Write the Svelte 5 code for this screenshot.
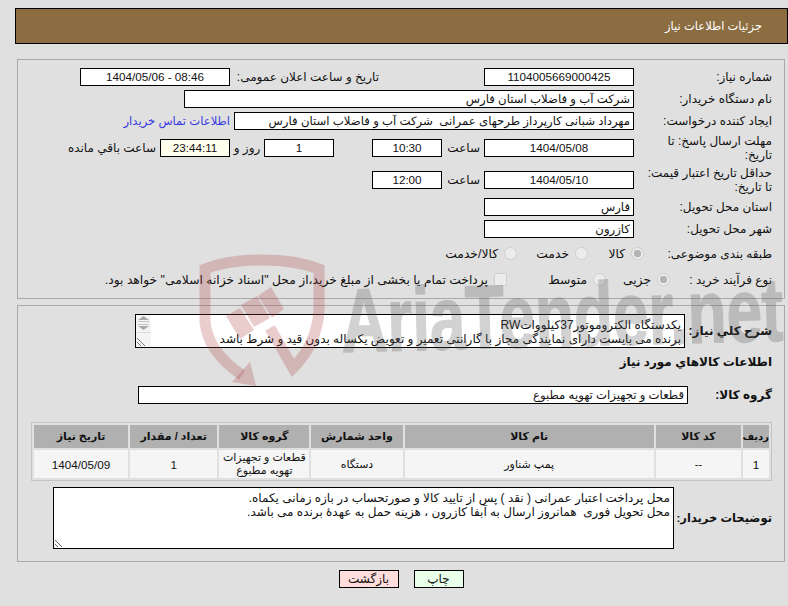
<script lang="ts">
  type Item = { row: string; code: string; name: string; unit: string; group: string; qty: string; date: string };

  const columns = [
    { title: 'ردیف', width: 26 },
    { title: 'کد کالا', width: 85 },
    { title: 'نام کالا', width: 249 },
    { title: 'واحد شمارش', width: 91 },
    { title: 'گروه کالا', width: 90 },
    { title: 'تعداد / مقدار', width: 87 },
    { title: 'تاریخ نیاز', width: 94 }
  ];

  const items: Item[] = [
    { row: '1', code: '--', name: 'پمپ شناور', unit: 'دستگاه', group: 'قطعات و تجهیزات تهویه مطبوع', qty: '1', date: '1404/05/09' }
  ];

  const summary =
    'یکدستگاه الکتروموتور37کیلوواتRW\nبرنده می بایست دارای نمایندگی مجاز با گارانتی تعمیر و تعویض یکساله بدون قید و شرط باشد';
  const notes =
    'محل پرداخت اعتبار عمرانی ( نقد ) پس از تایید کالا و صورتحساب در بازه زمانی یکماه.\nمحل تحویل فوری  همانروز ارسال به آبفا کازرون ، هزینه حمل به عهدهٔ برنده می باشد.';
</script>

<div class="page" dir="rtl">
  <header class="title-bar">جزئیات اطلاعات نیاز</header>

  <section class="panel info">
    <div class="row">
      <div class="label">شماره نیاز:</div>
      <div class="field center w150">1104005669000425</div>
      <div class="text announce">تاریخ و ساعت اعلان عمومی:</div>
      <div class="field center w150" dir="ltr">1404/05/06 - 08:46</div>
    </div>
    <div class="row">
      <div class="label">نام دستگاه خریدار:</div>
      <div class="field w450">شرکت آب و فاضلاب استان فارس</div>
    </div>
    <div class="row">
      <div class="label">ایجاد کننده درخواست:</div>
      <div class="field w400">مهرداد شبانی کارپرداز طرحهای عمرانی&nbsp; شرکت آب و فاضلاب استان فارس</div>
      <span class="link">اطلاعات تماس خریدار</span>
    </div>
    <div class="row tall">
      <div class="label">مهلت ارسال پاسخ: تا تاریخ:</div>
      <div class="field center w150">1404/05/08</div>
      <div class="text hour">ساعت</div>
      <div class="field center w70">10:30</div>
      <div class="field center w70 days">1</div>
      <div class="text day">روز و</div>
      <div class="field center w70 remain">23:44:11</div>
      <div class="text left">ساعت باقي مانده</div>
    </div>
    <div class="row tall">
      <div class="label">حداقل تاریخ اعتبار قیمت: تا تاریخ:</div>
      <div class="field center w150">1404/05/10</div>
      <div class="text hour">ساعت</div>
      <div class="field center w70">12:00</div>
    </div>
    <div class="row">
      <div class="label">استان محل تحویل:</div>
      <div class="field w150">فارس</div>
    </div>
    <div class="row">
      <div class="label">شهر محل تحویل:</div>
      <div class="field w150">کازرون</div>
    </div>
    <div class="row choice cat">
      <div class="label cat-label">طبقه بندی موضوعی:</div>
      <label class="opt o1"><input type="radio" name="cat" checked disabled />کالا</label>
      <label class="opt o2"><input type="radio" name="cat" disabled />خدمت</label>
      <label class="opt"><input type="radio" name="cat" disabled />کالا/خدمت</label>
    </div>
    <div class="row choice kind">
      <div class="label kind-label">نوع فرآیند خرید :</div>
      <label class="opt o4"><input type="radio" name="kind" checked disabled />جزیی</label>
      <label class="opt o5"><input type="radio" name="kind" disabled />متوسط</label>
      <label class="opt"><input type="checkbox" disabled />پرداخت تمام یا بخشی از مبلغ خرید،از محل "اسناد خزانه اسلامی" خواهد بود.</label>
    </div>
  </section>

  <section class="panel detail">
    <div class="row summary">
      <div class="label bold short summary-label">شرح کلي نیاز:</div>
      <div class="area-wrap">
        <textarea class="area area-summary" readonly value={summary}></textarea>
        <div class="fake-scroll">
          <svg width="15" height="32" viewBox="0 0 15 32">
            <path d="M7.5 1 L13 5 H2 Z M2 11 H13 L7.5 15 Z" fill="#a8a8a8" />
            <path d="M2 6.5 H13 M2 9.5 H13" stroke="#c4c4c4" />
            <path d="M0 17.5 H15" stroke="#dcdcdc" />
            <path d="M1 23 L9 31 M1 27 L5 31" stroke="#777" />
          </svg>
        </div>
      </div>
    </div>
    <div class="heading">اطلاعات کالاهاي مورد نیاز</div>
    <div class="row group">
      <div class="label bold short group-label">گروه کالا:</div>
      <div class="field w550">قطعات و تجهیزات تهویه مطبوع</div>
    </div>

    <table class="goods">
      <thead>
        <tr>
          {#each columns as col}
            <th style="width: {col.width}px">{col.title}</th>
          {/each}
        </tr>
      </thead>
      <tbody>
        {#each items as item}
          <tr>
            <td class="num">{item.row}</td>
            <td>{item.code}</td>
            <td>{item.name}</td>
            <td>{item.unit}</td>
            <td>{item.group}</td>
            <td class="num">{item.qty}</td>
            <td class="num">{item.date}</td>
          </tr>
        {/each}
      </tbody>
    </table>

    <div class="row notes">
      <div class="label bold notes-label">توضیحات خریدار:</div>
      <textarea class="area area-notes" readonly value={notes}></textarea>
    </div>
  </section>

  <div class="actions">
    <button class="btn print">چاپ</button>
    <button class="btn back">بازگشت</button>
  </div>

  <svg class="watermark" width="788" height="606" viewBox="0 0 788 606" aria-hidden="true">
    <g fill="none" stroke="rgb(171,60,60)" stroke-opacity="0.26" stroke-width="11">
      <path d="M262 260 Q228 260 205 269 V322 Q208 352 242 375" />
      <path d="M262 260 Q296 260 319 269 V312 Q316 345 293 368 L270 328" />
    </g>
    <g fill="rgb(171,60,60)" fill-opacity="0.26">
      <path d="M226 316 L240 308 L254 330 L240 339 Z" />
      <path d="M241 305 L257 296 L270 318 L254 327 Z" />
      <path d="M258 296 L271 287 L284 309 L272 318 Z" />
      <path d="M250 362 L256 386 L232 382 Z" />
    </g>
    <text
      class="mark-text"
      x="342"
      y="352"
      textLength="442"
      lengthAdjust="spacingAndGlyphs"
      transform="rotate(-1.5 342 352)">AriaTender.net</text>
  </svg>
</div>

<style>
  :global(body) {
    margin: 0;
    background: #e0e0e0;
  }

  .page {
    position: relative;
    width: 788px;
    height: 606px;
    box-sizing: border-box;
    overflow: hidden;
    padding-top: 8px;
    font-family: "Liberation Sans", "DejaVu Sans", sans-serif;
    font-size: 12px;
    color: #111;
  }

  .title-bar {
    box-sizing: border-box;
    height: 36px;
    margin-left: 15px;
    padding: 0 25px;
    display: flex;
    align-items: center;
    background: #8c6d42;
    border: 1px solid #000;
    color: #fff;
    font-size: 11.5px;
  }

  .panel {
    box-sizing: border-box;
    width: 768px;
    margin-right: 3px;
    padding: 8px 12px 0 0;
    border: 1px solid #a9a9a9;
  }

  .info {
    height: 240px;
    margin-top: 15px;
    display: flex;
    flex-direction: column;
    gap: 4px;
  }

  .detail {
    height: 257px;
    margin-top: 6px;
  }

  .row {
    display: flex;
    align-items: center;
    min-height: 18px;
  }

  .tall {
    min-height: 28px;
  }

  .cat {
    min-height: 24px;
  }

  .kind {
    min-height: 20px;
  }

  .label {
    flex: none;
    box-sizing: border-box;
    width: 138px;
    padding-left: 8px;
    line-height: 14px;
  }

  .short {
    padding-left: 0;
    white-space: nowrap;
  }

  .summary-label {
    width: 87px;
  }

  .group-label {
    width: 84px;
  }

  .bold {
    font-weight: 700;
  }

  .cat-label {
    width: 128px;
    padding-left: 0;
    white-space: nowrap;
  }

  .kind-label {
    width: 102px;
    padding-left: 0;
    white-space: nowrap;
  }

  .field {
    box-sizing: border-box;
    flex: none;
    height: 18px;
    line-height: 16px;
    padding: 0 3px;
    background: #fff;
    border: 1px solid #000;
    font-size: 11.7px;
    white-space: nowrap;
    overflow: hidden;
  }

  .center {
    text-align: center;
  }

  .w70 { width: 70px; }
  .w150 { width: 150px; }
  .w400 { width: 400px; }
  .w450 { width: 450px; }
  .w550 { width: 550px; }

  .text {
    flex: none;
    box-sizing: border-box;
  }

  .announce {
    width: 254px;
    padding-right: 105px;
  }

  .hour {
    width: 42px;
    padding-right: 4px;
  }

  .days {
    margin-right: 38px;
  }

  .day {
    width: 34px;
    text-align: center;
  }

  .remain {
    background: #ffffee;
  }

  .left {
    margin-right: 4px;
  }

  .link {
    margin-right: 4px;
    color: #3a3ae0;
    font-size: 11.6px;
  }

  .opt {
    display: flex;
    align-items: center;
    flex: none;
    box-sizing: border-box;
    font-size: 12.3px;
  }

  .opt input {
    appearance: none;
    flex: none;
    box-sizing: border-box;
    position: relative;
    top: -1px;
    margin: 0 0 0 6px;
    width: 13px;
    height: 13px;
    background: #ececec;
    border: 1px solid #cfcfcf;
    border-radius: 50%;
  }

  .opt input[type="checkbox"] {
    border-radius: 2px;
  }

  .opt input:checked {
    background: radial-gradient(circle, #b4b4b4 0 3.5px, #ececec 4px);
  }

  .o1 { width: 56px; }
  .o2 { width: 71px; }
  .o4 { width: 64px; }
  .o5 { width: 99px; }

  .area-wrap {
    position: relative;
  }

  .area {
    box-sizing: border-box;
    display: block;
    margin: 0;
    padding: 3px 3px 0;
    border: 1px solid #000;
    background: #fff;
    color: #111;
    font: inherit;
    line-height: 14px;
    outline: none;
  }

  .area-summary {
    width: 550px;
    height: 34px;
  }

  .area-notes {
    width: 621px;
    height: 62px;
  }

  .fake-scroll {
    position: absolute;
    top: 1px;
    left: 1px;
    width: 15px;
    height: 32px;
    background: #f4f4f4;
  }

  .fake-scroll svg {
    display: block;
  }

  .heading {
    margin-top: 5px;
    height: 18px;
    line-height: 18px;
    font-weight: 700;
  }

  .group {
    margin-top: 15px;
  }

  .goods {
    width: 741px;
    margin: 18px 0 0 0;
    table-layout: fixed;
    border: 1px solid #c4c4c4;
    border-spacing: 2px;
    font-size: 11px;
  }

  .goods th {
    height: 23px;
    padding: 0;
    background: #b0b0b0;
    font-weight: 700;
  }

  .goods th:first-child {
    font-size: 10px;
  }

  .goods td {
    height: 28px;
    padding: 0 3px;
    background: #f5f5f5;
    text-align: center;
    line-height: 13px;
  }

  .goods .num {
    font-size: 11.7px;
  }

  .notes {
    margin-top: 6px;
  }

  .notes-label {
    width: 98px;
    padding-left: 0;
    white-space: nowrap;
    font-size: 11.5px;
  }

  .actions {
    width: 768px;
    margin: 8px 3px 0 0;
    display: flex;
    justify-content: center;
    gap: 15px;
  }

  .btn {
    box-sizing: border-box;
    height: 18px;
    padding: 0;
    border: 1px solid #000;
    font: inherit;
    color: #111;
  }

  .print {
    width: 50px;
    background: #eaffea;
  }

  .back {
    width: 60px;
    background: #ffdddd;
  }

  .watermark {
    position: absolute;
    top: 0;
    left: 0;
    pointer-events: none;
    direction: ltr;
  }

  .mark-text {
    font-family: "Liberation Sans", sans-serif;
    font-weight: 700;
    font-size: 90px;
    fill: #555;
    stroke: #555;
    stroke-width: 1.5px;
    opacity: 0.26;
  }
</style>
